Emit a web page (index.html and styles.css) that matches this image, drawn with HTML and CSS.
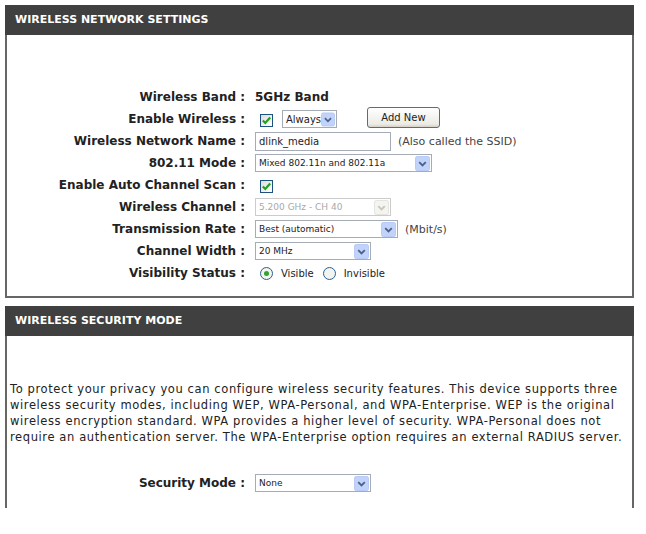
FILE: index.html
```html
<!DOCTYPE html>
<html lang="en">
<head>
    <meta charset="UTF-8">
    <title>Wireless Settings</title>
    <link rel="stylesheet" href="styles.css">
</head>
<body>

    <!-- Wireless network settings -->
    <div class="panel">
        <div class="panel-head">WIRELESS NETWORK SETTINGS</div>
        <div class="form form-network">
            <span class="label">Wireless Band :</span>
            <span class="value strong">5GHz Band</span>

            <span class="label">Enable Wireless :</span>
            <span class="value">
                <span class="check"><svg viewBox="0 0 9 9"><path d="M1.5 4.5 3.5 6.5 7.5 2" fill="none" stroke="#21a121" stroke-width="1.8"/></svg></span>
                <span class="select w-always">Always<svg class="arr" viewBox="0 0 16 16"><rect x="0.5" y="0.5" width="15" height="15" rx="2" fill="#c1d3fb" stroke="#b4c8f5"/><path d="M4.5 6.5 8 10 11.5 6.5" fill="none" stroke="#4d6185" stroke-width="2"/></svg></span>
                <span class="btn">Add New</span>
            </span>

            <span class="label">Wireless Network Name :</span>
            <span class="value">
                <span class="input">dlink_media</span>
                <span class="note">(Also called the SSID)</span>
            </span>

            <span class="label">802.11 Mode :</span>
            <span class="value">
                <span class="select w-mode">Mixed 802.11n and 802.11a<svg class="arr" viewBox="0 0 16 16"><rect x="0.5" y="0.5" width="15" height="15" rx="2" fill="#c1d3fb" stroke="#b4c8f5"/><path d="M4.5 6.5 8 10 11.5 6.5" fill="none" stroke="#4d6185" stroke-width="2"/></svg></span>
            </span>

            <span class="label">Enable Auto Channel Scan :</span>
            <span class="value">
                <span class="check"><svg viewBox="0 0 9 9"><path d="M1.5 4.5 3.5 6.5 7.5 2" fill="none" stroke="#21a121" stroke-width="1.8"/></svg></span>
            </span>

            <span class="label">Wireless Channel :</span>
            <span class="value">
                <span class="select w-channel disabled">5.200 GHz - CH 40<svg class="arr" viewBox="0 0 16 16"><rect x="0.5" y="0.5" width="15" height="15" rx="2" fill="#f4f4f0" stroke="#e2e2dc"/><path d="M4.5 6.5 8 10 11.5 6.5" fill="none" stroke="#c9c7ba" stroke-width="2"/></svg></span>
            </span>

            <span class="label">Transmission Rate :</span>
            <span class="value">
                <span class="select w-rate">Best (automatic)<svg class="arr" viewBox="0 0 16 16"><rect x="0.5" y="0.5" width="15" height="15" rx="2" fill="#c1d3fb" stroke="#b4c8f5"/><path d="M4.5 6.5 8 10 11.5 6.5" fill="none" stroke="#4d6185" stroke-width="2"/></svg></span>
                <span class="note">(Mbit/s)</span>
            </span>

            <span class="label">Channel Width :</span>
            <span class="value">
                <span class="select w-width">20 MHz<svg class="arr" viewBox="0 0 16 16"><rect x="0.5" y="0.5" width="15" height="15" rx="2" fill="#c1d3fb" stroke="#b4c8f5"/><path d="M4.5 6.5 8 10 11.5 6.5" fill="none" stroke="#4d6185" stroke-width="2"/></svg></span>
            </span>

            <span class="label">Visibility Status :</span>
            <span class="value">
                <span class="radio on"></span><span class="opt">Visible</span>
                <span class="radio"></span><span class="opt">Invisible</span>
            </span>
        </div>
    </div>

    <!-- Wireless security mode -->
    <div class="panel panel-open">
        <div class="panel-head">WIRELESS SECURITY MODE</div>
        <p class="intro">To protect your privacy you can configure wireless security features. This device supports three<br>
            wireless security modes, including WEP, WPA-Personal, and WPA-Enterprise. WEP is the original<br>
            wireless encryption standard. WPA provides a higher level of security. WPA-Personal does not<br>
            require an authentication server. The WPA-Enterprise option requires an external RADIUS server.</p>
        <div class="form">
            <span class="label">Security Mode :</span>
            <span class="value">
                <span class="select w-width">None<svg class="arr" viewBox="0 0 16 16"><rect x="0.5" y="0.5" width="15" height="15" rx="2" fill="#c1d3fb" stroke="#b4c8f5"/><path d="M4.5 6.5 8 10 11.5 6.5" fill="none" stroke="#4d6185" stroke-width="2"/></svg></span>
            </span>
        </div>
    </div>

</body>
</html>
```

FILE: styles.css
```css
body {
    margin: 0;
    padding: 5px 12px 0 5px;
    background: #fff;
    font-family: "DejaVu Sans", Verdana, sans-serif;
    color: #222;
}

.panel {
    border: 2px solid #666;
    border-top: none;
    margin-bottom: 8px;
}

.panel-open {
    border-bottom: none;
    height: 202px;
}

.panel-head {
    background-color: #404040;
    color: #fff;
    font-weight: bold;
    font-size: 11px;
    height: 30px;
    line-height: 30px;
    padding-left: 10px;
    margin: 0 -2px;
}

.form {
    display: grid;
    grid-template-columns: 238px 1fr;
    column-gap: 10px;
    grid-auto-rows: 22px;
    align-items: center;
}

.form-network {
    padding: 51px 0 12px;
}

.label {
    text-align: right;
    font-weight: bold;
    font-size: 12px;
    white-space: nowrap;
}

.value {
    display: flex;
    align-items: center;
    font-size: 11px;
}

.strong {
    font-weight: bold;
    font-size: 12px;
}

.check {
    width: 11px;
    height: 11px;
    border: 1px solid #1c5180;
    background: linear-gradient(135deg, #dcdcd7, #fff);
    margin: 2px 9px 0 5px;
    display: inline-flex;
}

.check svg {
    width: 11px;
    height: 11px;
}

.select {
    display: inline-flex;
    align-items: center;
    justify-content: space-between;
    height: 18px;
    border: 1px solid #a5acb5;
    background: #fff;
    padding: 0 1px 0 3px;
    font-size: 9px;
    box-sizing: border-box;
    color: #222;
}

.select .arr {
    width: 15px;
    height: 15px;
}

.disabled {
    color: #a9a9a9;
    border-color: #ccc;
}

.w-always { width: 55px; font-size: 10px; }
.w-mode { width: 177px; }
.w-channel { width: 136px; }
.w-rate { width: 143px; }
.w-width { width: 116px; }

.btn {
    margin-left: 30px;
    width: 73px;
    height: 21px;
    border: 1px solid #5a6c84;
    border-radius: 3px;
    background: linear-gradient(#fff, #ecebe6 85%, #d6d0c5);
    font-size: 10px;
    display: inline-flex;
    justify-content: center;
    align-items: center;
    box-sizing: border-box;
    margin-top: -3px;
}

.input {
    width: 136px;
    height: 19px;
    border: 1px solid #a5acb5;
    box-sizing: border-box;
    font-size: 10px;
    padding-left: 3px;
    display: inline-flex;
    align-items: center;
}

.note {
    margin-left: 7px;
    font-size: 11px;
    color: #444;
}

.radio {
    width: 11px;
    height: 11px;
    border: 1px solid #2a5f8f;
    border-radius: 50%;
    margin: 0 8px 0 5px;
    background: #f3f3ef;
    position: relative;
}

.radio.on::after {
    content: "";
    position: absolute;
    left: 3px;
    top: 3px;
    width: 5px;
    height: 5px;
    border-radius: 50%;
    background: #2fa32f;
}

.opt {
    font-size: 10px;
    margin-right: 4px;
}

.intro {
    margin: 45px 4px 27px 3px;
    font-size: 11.5px;
    letter-spacing: 0.6px;
    line-height: 16px;
    white-space: nowrap;
    color: #222;
}
```
